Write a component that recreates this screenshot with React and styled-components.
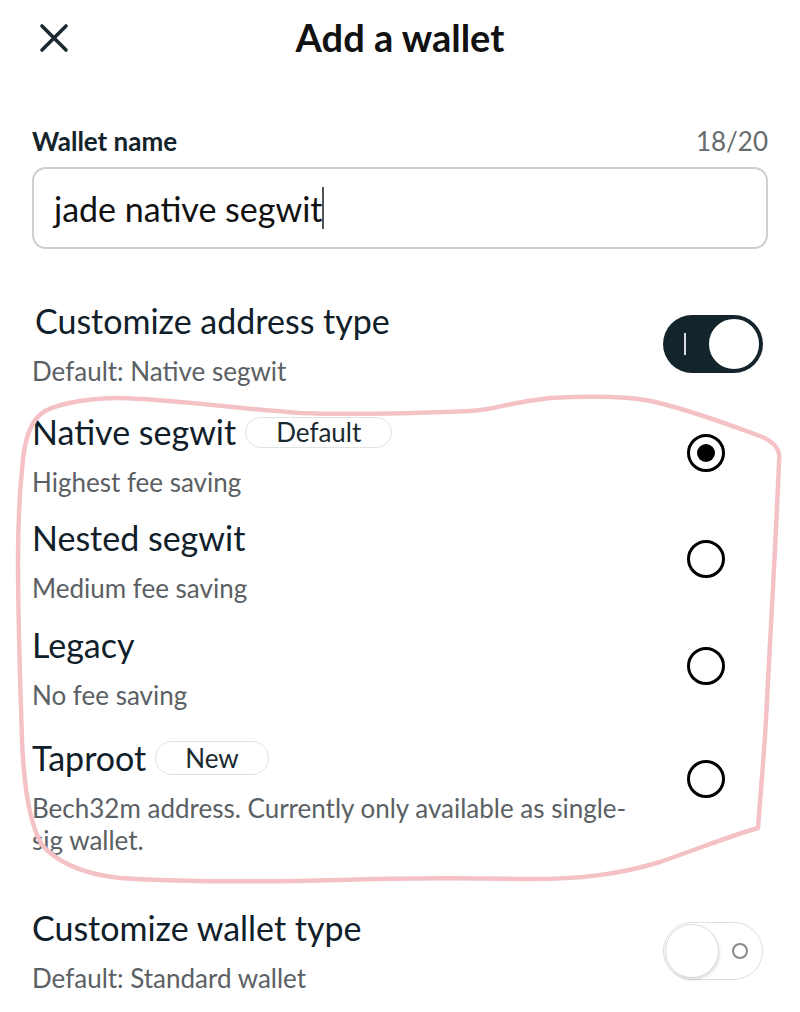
import React from "react";
import styled, { createGlobalStyle } from "styled-components";

const GlobalStyle = createGlobalStyle`
  html, body {
    margin: 0;
    padding: 0;
    background: #ffffff;
  }
  body {
    font-family: Lato, "Open Sans", "Liberation Sans", sans-serif;
    color: #10202a;
  }
`;

const Page = styled.div`
  position: relative;
  width: 800px;
  min-height: 1012px;
  box-sizing: border-box;
  padding: 0 32px;
  overflow: hidden;
`;

const Header = styled.header`
  position: relative;
  height: 74px;
  display: flex;
  align-items: center;
  justify-content: center;
`;

const CloseButton = styled.button`
  position: absolute;
  left: 4px;
  top: 20px;
  width: 36px;
  height: 36px;
  padding: 0;
  border: none;
  background: none;
  display: flex;
  align-items: center;
  justify-content: center;
  color: #1b2a30;
`;

const Title = styled.h1`
  margin: 0;
  font-size: 38px;
  font-weight: 700;
  color: #111111;
`;

const LabelRow = styled.div`
  margin-top: 53px;
  display: flex;
  justify-content: space-between;
  align-items: center;
  line-height: 28px;
`;

const Label = styled.span`
  font-size: 26px;
  font-weight: 700;
  color: #13232b;
`;

const Counter = styled.span`
  font-size: 26px;
  color: #666b6e;
`;

const InputBox = styled.div`
  margin-top: 12px;
  height: 82px;
  box-sizing: border-box;
  border: 2px solid #cfcfcf;
  border-radius: 14px;
  display: flex;
  align-items: center;
  padding-left: 20px;
  font-size: 34px;
  color: #111111;
`;

const Caret = styled.span`
  display: inline-block;
  width: 1.5px;
  height: 42px;
  background: #555555;
`;

const SettingRow = styled.div`
  margin-top: ${(p) => p.$top}px;
  display: flex;
  align-items: center;
  justify-content: space-between;
`;

const TextCol = styled.div`
  display: flex;
  flex-direction: column;
  width: ${(p) => p.$width || 560}px;
`;

const RowTitle = styled.div`
  display: flex;
  align-items: center;
  font-size: 34px;
  line-height: 40px;
  color: #10202a;
  padding-left: ${(p) => p.$indent || 0}px;
`;

const RowDesc = styled.div`
  margin-top: 14px;
  font-size: 26px;
  line-height: 32px;
  color: #5b6064;
`;

const Badge = styled.span`
  margin-left: 9px;
  height: ${(p) => p.$h}px;
  box-sizing: border-box;
  padding: 0 ${(p) => p.$pad}px;
  border: 1.5px solid #e2e2e2;
  border-radius: 20px;
  display: inline-flex;
  align-items: center;
  font-size: 26px;
  color: #1a2a30;
`;

const Toggle = styled.div`
  position: relative;
  width: 100px;
  height: 58px;
  box-sizing: border-box;
  border-radius: 29px;
  margin-right: 5px;
  background: ${(p) => (p.$on ? "#14242c" : "#ffffff")};
  border: ${(p) => (p.$on ? "none" : "1.5px solid #dedede")};
`;

const Knob = styled.span`
  position: absolute;
  top: ${(p) => (p.$on ? 2 : 1)}px;
  ${(p) => (p.$on ? "right: 2px;" : "left: 1px;")}
  width: 54px;
  height: 54px;
  box-sizing: border-box;
  border-radius: 50%;
  background: #ffffff;
  border: ${(p) => (p.$on ? "2px solid #14242c" : "1.5px solid #dcdcdc")};
  box-shadow: ${(p) => (p.$on ? "none" : "1px 2px 3px rgba(0,0,0,0.12)")};
`;

const OnMark = styled.span`
  position: absolute;
  left: 21px;
  top: 18px;
  width: 2px;
  height: 22px;
  background: #d8dcde;
`;

const OffMark = styled.span`
  position: absolute;
  right: 14px;
  top: 20px;
  width: 16px;
  height: 16px;
  box-sizing: border-box;
  border-radius: 50%;
  border: 2.5px solid #8a8a8a;
`;

const OptionList = styled.div`
  margin-top: 25px;
  display: flex;
  flex-direction: column;
`;

const Option = styled.label`
  margin-top: ${(p) => p.$top || 0}px;
  display: flex;
  align-items: flex-start;
  justify-content: space-between;
`;

const Radio = styled.span`
  margin-top: 22px;
  margin-right: 43px;
  width: 38px;
  height: 38px;
  box-sizing: border-box;
  border-radius: 50%;
  border: 3px solid #000000;
  display: flex;
  align-items: center;
  justify-content: center;

  &::after {
    content: "";
    width: 18px;
    height: 18px;
    border-radius: 50%;
    background: #000000;
    display: ${(p) => (p.$checked ? "block" : "none")};
  }
`;

const Annotation = styled.svg`
  position: absolute;
  left: 0;
  top: 0;
  pointer-events: none;
`;

const options = [
  { title: "Native segwit", badge: "Default", desc: "Highest fee saving", checked: true },
  { title: "Nested segwit", desc: "Medium fee saving", top: 20 },
  { title: "Legacy", desc: "No fee saving", top: 21 },
  {
    title: "Taproot",
    badge: "New",
    desc: "Bech32m address. Currently only available as single-sig wallet.",
    top: 27,
  },
];

function CloseIcon() {
  return (
    <svg width="30" height="30" viewBox="0 0 30 30">
      <path d="M3 3 L27 27 M27 3 L3 27" stroke="currentColor" strokeWidth="3.6" strokeLinecap="round" />
    </svg>
  );
}

export default function App() {
  return (
    <>
      <GlobalStyle />
      <Page>
        <Header>
          <CloseButton aria-label="Close">
            <CloseIcon />
          </CloseButton>
          <Title>Add a wallet</Title>
        </Header>

        <LabelRow>
          <Label>Wallet name</Label>
          <Counter>18/20</Counter>
        </LabelRow>
        <InputBox>
          jade native segwit
          <Caret />
        </InputBox>

        <SettingRow $top={52}>
          <TextCol>
            <RowTitle $indent={3}>Customize address type</RowTitle>
            <RowDesc>Default: Native segwit</RowDesc>
          </TextCol>
          <Toggle $on>
            <OnMark />
            <Knob $on />
          </Toggle>
        </SettingRow>

        <OptionList>
          {options.map((o) => (
            <Option key={o.title} $top={o.top}>
              <TextCol $width={600}>
                <RowTitle>
                  {o.title}
                  {o.badge && (
                    <Badge $h={o.badge === "New" ? 34 : 31} $pad={o.badge === "New" ? 29 : 30}>
                      {o.badge}
                    </Badge>
                  )}
                </RowTitle>
                <RowDesc>{o.desc}</RowDesc>
              </TextCol>
              <Radio $checked={o.checked} />
            </Option>
          ))}
        </OptionList>

        <SettingRow $top={52}>
          <TextCol>
            <RowTitle>Customize wallet type</RowTitle>
            <RowDesc>Default: Standard wallet</RowDesc>
          </TextCol>
          <Toggle>
            <Knob />
            <OffMark />
          </Toggle>
        </SettingRow>

        <Annotation width="800" height="1012" viewBox="0 0 800 1012">
          <path
            d="M22 470 C 24 440, 30 420, 45 411 C 60 403, 90 398, 120 398 C 170 399, 230 408, 300 413
               C 350 415, 420 413, 470 411 C 495 410, 505 403, 550 398 C 590 396, 630 396, 655 402
               C 690 410, 730 425, 760 436 C 775 442, 781 450, 779 462 C 776 540, 770 640, 766 720
               C 763 770, 760 800, 758 828 C 730 836, 700 848, 660 862 C 620 874, 580 880, 520 879
               C 460 878, 400 878, 340 880 C 260 882, 180 882, 120 878 C 80 874, 55 860, 42 845
               C 30 825, 24 790, 22 740 C 20 680, 18 620, 18 560 C 18 520, 20 490, 22 470 Z"
            fill="none"
            stroke="#f4c2c5"
            strokeWidth="4.5"
            strokeLinejoin="round"
          />
        </Annotation>
      </Page>
    </>
  );
}
